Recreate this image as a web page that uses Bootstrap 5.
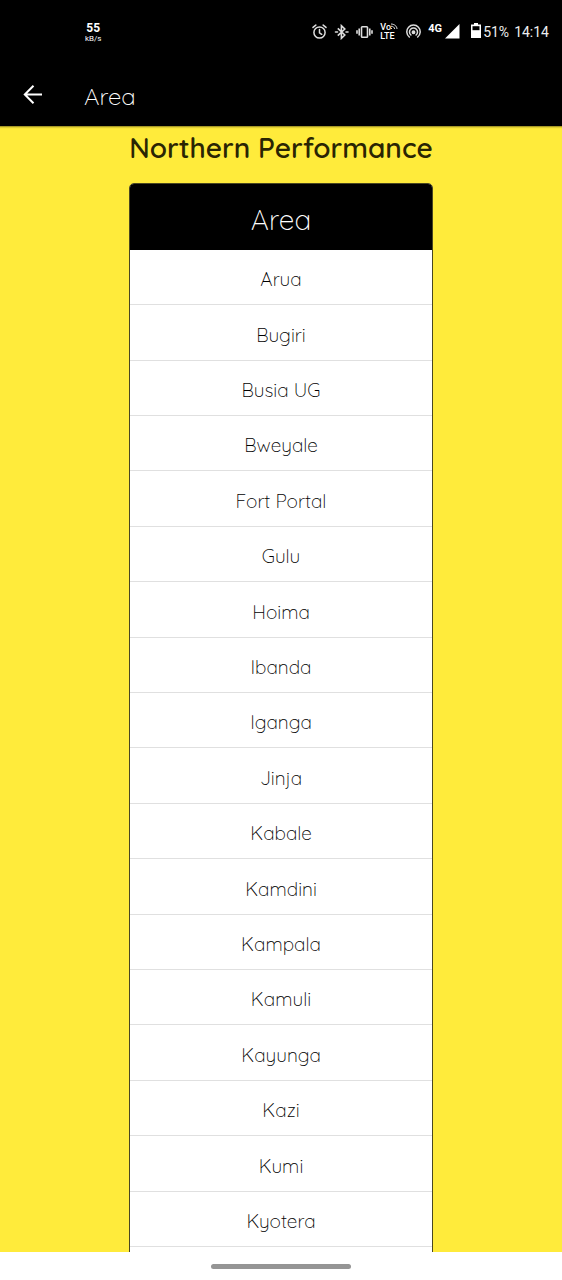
<!DOCTYPE html>
<html lang="en">
<head>
<meta charset="utf-8">
<meta name="viewport" content="width=device-width, initial-scale=1">
<title>Area</title>
<link href="https://cdn.jsdelivr.net/npm/bootstrap@5.3.0/dist/css/bootstrap.min.css" rel="stylesheet">
<style>
  body { font-family: Quicksand, "Open Sans", sans-serif; background: #fff; }
  .status-bar { height: 64px; padding: 0 13px 0 85px; font-family: Roboto, sans-serif; }
  .net-speed { font-size: 12px; line-height: 12px; font-weight: 700; }
  .net-unit { font-size: 8px; line-height: 9px; font-weight: 400; }
  .status-icons { gap: 7px; }
  .status-icons svg { display: block; }
  .volte { font-size: 9px; line-height: 9px; font-weight: 500; width: 19px; }
  .net-type { font-size: 11px; line-height: 12px; font-weight: 700; margin-bottom: 6px; }
  .clock { font-size: 14px; line-height: 20px; font-weight: 400; color: #eee; gap: 5px; }
  .battery { gap: 2px; }
  .app-bar { height: 62px; padding-left: 21px; gap: 39px; }
  .app-bar h1 { font-size: 24px; line-height: 28px; font-weight: 300; padding-top: 2px; }
  .app-bar button { width: 24px; height: 24px; }
  .content-area { background: #ffeb3b; overflow-y: auto; scrollbar-width: none; box-shadow: inset 0 3px 2px -2px #8a7d20; }
  .content-area::-webkit-scrollbar { display: none; }
  .region-title { font-size: 28px; line-height: 36px; font-weight: 600; color: #2a2503; padding-top: 4px; margin-bottom: 17px; }
  .area-table { width: 304px; border: 1px solid #4a4720; border-radius: 5px 5px 0 0; overflow: hidden; background: #fff; }
  .area-table table { border-collapse: separate; border-spacing: 0; }
  .area-table th { height: 66px; padding: 6px 0 0; background: #000; color: #fff; font-size: 28px; line-height: 36px; font-weight: 300; }
  .area-table td { height: 55px; padding: 4px 0 0; border-bottom: 1px solid #e0e0e0; font-size: 19px; line-height: 24px; font-weight: 300; color: #000; }
  .area-table tr:nth-child(5n+2) td, .area-table tr:nth-child(5n) td { height: 56px; }
  .gesture-bar { height: 28px; }
  .gesture-pill { width: 140px; height: 5px; background: #959595; }
</style>
</head>
<body class="vh-100 d-flex flex-column overflow-hidden">
  <header class="bg-black text-white flex-shrink-0">
    <div class="status-bar d-flex align-items-center justify-content-between">
      <div class="text-center">
        <div class="net-speed">55</div>
        <div class="net-unit">kB/s</div>
      </div>
      <div class="status-icons d-flex align-items-center">
        <svg width="15" height="16" viewBox="0 0 15 16" fill="none" stroke="#ddd" stroke-width="1.5" stroke-linecap="round"><circle cx="7.5" cy="8.500" r="5.600"/><path d="M7.500 5.500v3.400l2.200 1.400M1 3.400 3.800 1.100M14 3.400 11.200 1.100"/></svg>
        <svg width="15" height="16" viewBox="0 0 15 16" fill="none" stroke="#ddd" stroke-width="1.600"><path d="m3.800 4.400 7 6.600-3.400 3.300V1.700L10.800 5l-7 6.600"/><path d="M1.500 8h2M12 8h2" stroke-linecap="round"/></svg>
        <svg width="17" height="16" viewBox="0 0 17 16" fill="none" stroke="#ddd" stroke-width="1.600"><rect x="5.500" y="2.700" width="6" height="10.600" rx=".8"/><path d="M3.200 4.600v6.800M13.800 4.600v6.800M1 6.200v3.600M16 6.200v3.600"/></svg>
        <div class="volte">
          <div class="d-flex">Vo<svg width="7" height="7" viewBox="0 0 7 7" fill="none" stroke="#ddd"><path d="M0 1c3 0 6 2 6 5M0 3.200C2 3.200 3.700 4.500 3.700 6M0 5.500h1"/></svg></div>
          <div>LTE</div>
        </div>
        <svg width="15" height="16" viewBox="0 0 15 16" fill="none" stroke="#ddd" stroke-width="1.500" stroke-linecap="round"><path d="M3.300 13a6.700 6.700 0 1 1 8.400 0M4.900 11a4 4 0 1 1 5.200 0"/><circle cx="7.500" cy="8.300" r="1.200" fill="#ddd"/></svg>
        <div class="d-flex align-items-center">
          <span class="net-type">4G</span>
          <svg width="18" height="16" viewBox="0 0 18 16"><path d="M17.500 0v14.500H3z" fill="#fff"/></svg>
        </div>
        <div class="clock d-flex align-items-center">
          <span class="battery d-flex align-items-center ms-1"><svg width="10" height="18" viewBox="0 0 10 18"><path d="M3 0h4v1.500h3V15H0V1.500h3z" fill="#fff"/><path d="M1.500 3.200h7v4h-7z" fill="#000"/></svg>51%</span>
          <span>14:14</span>
        </div>
      </div>
    </div>
    <nav class="app-bar d-flex align-items-center" aria-label="Top">
      <button type="button" class="btn p-0 border-0 d-flex" aria-label="Back"><svg width="24" height="24" viewBox="0 0 24 24" fill="none" stroke="#fff" stroke-width="2"><path d="M21 11.500H4M12.500 2.800 3.800 11.500l8.700 8.700"/></svg></button>
      <h1 class="mb-0">Area</h1>
    </nav>
  </header>
  <main class="content-area flex-grow-1 d-flex flex-column align-items-center">
    <h2 class="region-title flex-shrink-0">Northern Performance</h2>
    <div class="area-table flex-shrink-0">
      <table class="w-100 text-center align-middle">
        <thead><tr><th scope="col">Area</th></tr></thead>
        <tbody>
          <tr><td>Arua</td></tr>
          <tr><td>Bugiri</td></tr>
          <tr><td>Busia UG</td></tr>
          <tr><td>Bweyale</td></tr>
          <tr><td>Fort Portal</td></tr>
          <tr><td>Gulu</td></tr>
          <tr><td>Hoima</td></tr>
          <tr><td>Ibanda</td></tr>
          <tr><td>Iganga</td></tr>
          <tr><td>Jinja</td></tr>
          <tr><td>Kabale</td></tr>
          <tr><td>Kamdini</td></tr>
          <tr><td>Kampala</td></tr>
          <tr><td>Kamuli</td></tr>
          <tr><td>Kayunga</td></tr>
          <tr><td>Kazi</td></tr>
          <tr><td>Kumi</td></tr>
          <tr><td>Kyotera</td></tr>
          <tr><td></td></tr>
        </tbody>
      </table>
    </div>
  </main>
  <footer class="gesture-bar bg-white flex-shrink-0 d-flex align-items-center justify-content-center">
    <div class="gesture-pill rounded-pill"></div>
  </footer>
<script src="https://cdn.jsdelivr.net/npm/bootstrap@5.3.0/dist/js/bootstrap.bundle.min.js"></script>
</body>
</html>
